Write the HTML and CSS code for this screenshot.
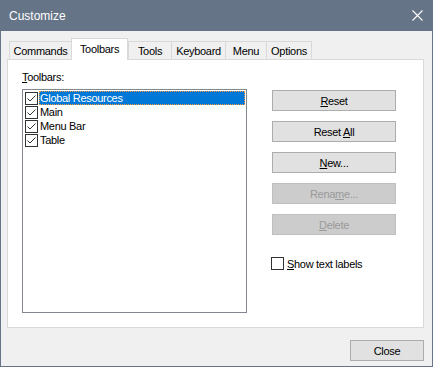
FILE: index.html
```html
<!DOCTYPE html>
<html>
<head>
<meta charset="utf-8">
<link rel="stylesheet" href="styles.css">
</head>
<body>
<div class="window">
  <div class="titlebar">
    <span class="title">Customize</span>
    <svg class="close-x" width="11" height="11" viewBox="0 0 11 11"><path d="M0.5 0.5 L10.5 10.5 M10.5 0.5 L0.5 10.5" stroke="#fff" stroke-width="1.1" fill="none"/></svg>
  </div>
  <div class="client">
    <div class="tabs">
      <div class="tab tab-commands">Commands</div>
      <div class="tab tab-toolbars active">Toolbars</div>
      <div class="tab tab-tools">Tools</div>
      <div class="tab tab-keyboard">Keyboard</div>
      <div class="tab tab-menu">Menu</div>
      <div class="tab tab-options last">Options</div>
    </div>
    <div class="panel">
      <div class="left">
        <div class="label"><u>T</u>oolbars:</div>
        <div class="list">
          <div class="item selected"><span class="cb"><svg width="11" height="11" viewBox="0 0 11 11"><path d="M1.5 5.5 L4 8 L9.5 2.5" stroke="#333" stroke-width="1" fill="none"/></svg></span><span class="text">Global Resources</span></div>
          <div class="item"><span class="cb"><svg width="11" height="11" viewBox="0 0 11 11"><path d="M1.5 5.5 L4 8 L9.5 2.5" stroke="#333" stroke-width="1" fill="none"/></svg></span><span class="text">Main</span></div>
          <div class="item"><span class="cb"><svg width="11" height="11" viewBox="0 0 11 11"><path d="M1.5 5.5 L4 8 L9.5 2.5" stroke="#333" stroke-width="1" fill="none"/></svg></span><span class="text">Menu Bar</span></div>
          <div class="item"><span class="cb"><svg width="11" height="11" viewBox="0 0 11 11"><path d="M1.5 5.5 L4 8 L9.5 2.5" stroke="#333" stroke-width="1" fill="none"/></svg></span><span class="text">Table</span></div>
        </div>
      </div>
      <div class="right">
        <button class="btn"><u>R</u>eset</button>
        <button class="btn">Reset <u>A</u>ll</button>
        <button class="btn"><u>N</u>ew...</button>
        <button class="btn" disabled>Rena<u>m</u>e...</button>
        <button class="btn" disabled><u>D</u>elete</button>
        <div class="check-row"><span class="cb"></span><span class="check-text"><u>S</u>how text labels</span></div>
      </div>
    </div>
    <div class="footer">
      <button class="btn btn-close">Close</button>
    </div>
  </div>
</div>
</body>
</html>
```

FILE: styles.css
```css
html, body {
  margin: 0;
  padding: 0;
  background: #f0f0f0;
}
body {
  font-family: "Liberation Sans", Arial, sans-serif;
  font-size: 11px;
  letter-spacing: -0.3px;
  color: #000;
}
.window {
  width: 433px;
  height: 367px;
  display: flex;
  flex-direction: column;
  background: #f0f0f0;
}
.titlebar {
  height: 31px;
  flex: none;
  background: #657487;
  color: #fff;
  display: flex;
  align-items: center;
  justify-content: space-between;
  padding: 0 10px 0 9px;
  font-size: 12px;
  letter-spacing: 0;
}
.close-x {
  display: block;
}
.client {
  flex: 1;
  border: 1px solid #657487;
  border-top: 0;
  padding: 7px 8px 0 6px;
  display: flex;
  flex-direction: column;
}
.tabs {
  display: flex;
  align-items: flex-end;
  height: 21px;
  padding-left: 2px;
}
.tab {
  box-sizing: border-box;
  height: 18px;
  border-top: 1px solid #d9d9d9;
  border-left: 1px solid #d9d9d9;
  background: #f0f0f0;
  display: flex;
  align-items: center;
  justify-content: center;
  padding-top: 1px;
}
.tab.last {
  border-right: 1px solid #d9d9d9;
}
.tab.active {
  height: 22px;
  margin-bottom: -1px;
  background: #fff;
  border-right: 1px solid #d9d9d9;
  position: relative;
  z-index: 1;
  padding-top: 0;
  padding-bottom: 2px;
}
.tab-commands { width: 62px; }
.tab-toolbars { width: 57px; }
.tab-tools { width: 43px; }
.tab-keyboard { width: 54px; }
.tab-menu { width: 41px; }
.tab-options { width: 46px; }
.panel {
  box-sizing: border-box;
  height: 269px;
  border: 1px solid #d9d9d9;
  background: #fff;
  display: grid;
  grid-template-columns: 225px 124px;
  column-gap: 25px;
  align-items: start;
  padding: 11px 0 0 14px;
}
.label {
  line-height: 13px;
  margin-bottom: 5px;
}
.list {
  box-sizing: border-box;
  height: 224px;
  border: 1px solid #828790;
  padding: 1px;
}
.item {
  display: flex;
  align-items: center;
  height: 14px;
  padding-left: 1px;
}
.cb {
  box-sizing: border-box;
  width: 13px;
  height: 13px;
  border: 1px solid #333;
  background: #fff;
  flex: none;
  display: flex;
}
.cb svg {
  display: block;
}
.item .cb {
  margin-right: 1px;
}
.item .text {
  flex: 1;
  box-sizing: border-box;
  height: 14px;
  padding-left: 0;
  border: 1px solid transparent;
  line-height: 12px;
}
.item.selected .text {
  background: #0078d7;
  color: #fff;
  border: 1px dotted #ff9a3c;
}
.right {
  padding-top: 19px;
  display: flex;
  flex-direction: column;
}
.btn {
  box-sizing: border-box;
  width: 124px;
  height: 21px;
  border: 1px solid #adadad;
  background: #e1e1e1;
  font-family: "Liberation Sans", Arial, sans-serif;
  font-size: 11px;
  letter-spacing: -0.3px;
  color: #000;
  padding: 0;
  margin: 0 0 10px 0;
}
.btn:disabled {
  background: #cccccc;
  border-color: #bfbfbf;
  color: #9a9a9a;
}
.check-row {
  display: flex;
  align-items: center;
  margin-top: 12px;
  margin-left: -1px;
  height: 13px;
}
.check-text {
  margin-left: 3px;
}
.footer {
  display: flex;
  justify-content: flex-end;
  margin-top: 12px;
}
.btn-close {
  width: 74px;
  margin: 0;
}
```
